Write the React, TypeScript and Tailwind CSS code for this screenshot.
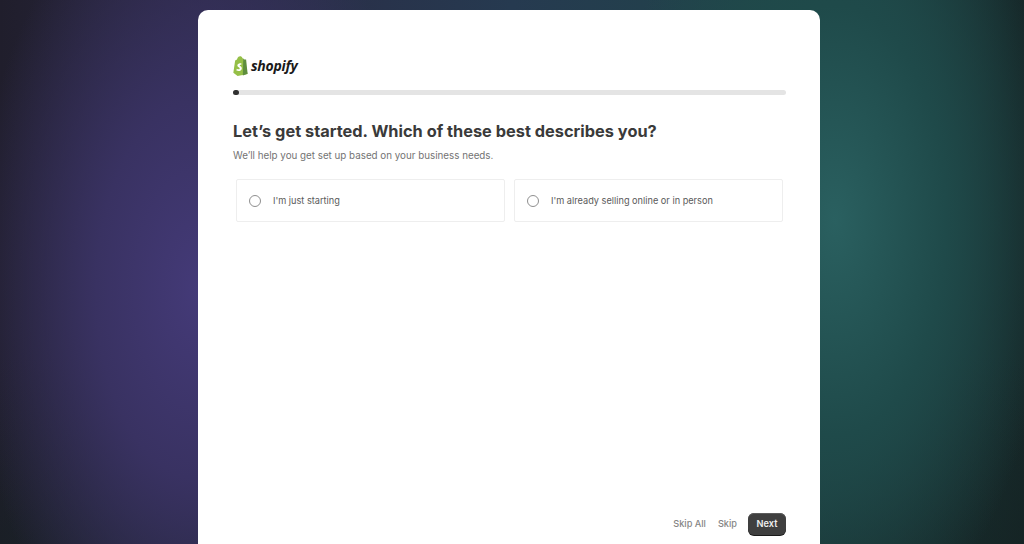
import React from 'react';

const options = ["I'm just starting", "I'm already selling online or in person"];

const ShopifyLogo = () => (
  <div className="flex items-center gap-[3px]">
    <svg width="16" height="20" viewBox="0 0 16 21" className="-ml-px">
      <path d="M1 17.6 L2.9 4.6 C4.4 4.1 4.8 3.8 5.2 2.6 C5.8 1 6.9 0.3 8 0.3 C9.3 0.3 10.1 1 10.6 2.3 L11.4 2.6 L16 19 L5.5 21 Z" fill="#95bf47" />
      <path d="M11.4 2.6 L12.6 3.6 L14.4 3.8 L16 18.6 L11 20.4 Z" fill="#5e8e3e" />
      <path d="M9.6 7.9 C8.9 7.5 8.2 7.5 7.7 7.6 C5.9 7.9 5 9.3 5.3 10.4 C5.7 11.9 7.7 11.8 7.7 13.1 C7.7 14.1 6.2 14.4 4.6 13.4 L4.2 15.2 C6.4 16.3 9.6 15.7 9.9 13 C10.1 11 8 10.7 7.7 9.9 C7.6 9.4 8.2 9.1 9.2 9.5 Z" fill="#ffffff" />
    </svg>
    <span className="font-['Open_Sans'] text-[14px] leading-none font-bold italic tracking-[-0.25px] text-[#1a1a1a]">
      shopify
    </span>
  </div>
);

export default function App() {
  return (
    <div className="flex h-[544px] w-full justify-center overflow-hidden bg-[radial-gradient(ellipse_230px_420px_at_200px_290px,#443a78_0%,#393262_45%,#2e2a4c00_100%),radial-gradient(ellipse_220px_430px_at_835px_220px,#2a6060_0%,#1f4a4a_50%,#1a3a3a00_100%),linear-gradient(180deg,transparent_65%,#14202080_100%),linear-gradient(90deg,#201e2c_0%,#2b2944_20%,#263a50_50%,#1f4648_80%,#162829_100%)] pr-[6px] pt-[10px] font-['Inter',sans-serif]">
      <main className="flex h-[534px] w-[622px] flex-col rounded-t-[10px] bg-white pl-[35px] pr-[34px]">
        <div className="pt-[46px]">
          <ShopifyLogo />
        </div>

        {/* Progress */}
        <div className="mt-[14px] h-[5px] w-full rounded-full bg-[#e4e4e4]">
          <div className="h-[5px] w-[6px] rounded-full bg-[#303030]" />
        </div>

        <h1 className="mt-[25px] text-[16.35px] leading-[22px] font-bold text-[#3a3a3a]">
          Let’s get started. Which of these best describes you?
        </h1>
        <p className="mt-[7px] text-[9.8px] leading-[14px] text-[#737373]">
          We’ll help you get set up based on your business needs.
        </p>

        <div className="mt-[16px] flex gap-[9px] px-[3px]">
          {options.map((label) => (
            <div
              key={label}
              className="flex h-[43px] flex-1 items-center gap-[12px] rounded-[2px] border border-[#eeeeee] pl-[12px]"
            >
              <span className="h-[12px] w-[12px] rounded-full border border-[#8f8f8f]" />
              <span className="text-[9.2px] text-[#5a5a5a]">{label}</span>
            </div>
          ))}
        </div>

        <div className="mt-auto mb-[9px] flex items-center justify-end">
          <span className="text-[9.2px] font-medium text-[#858585]">Skip All</span>
          <span className="ml-[12px] text-[9.2px] font-medium text-[#858585]">Skip</span>
          <button className="ml-[11px] h-[22px] w-[38px] rounded-[6px] bg-[#3f3f3f] text-[9.2px] font-semibold text-[#eeeeee] shadow-[inset_0_1px_0_#5c5c5c,0_1px_0_#1a1a1a]">
            Next
          </button>
        </div>
      </main>
    </div>
  );
}
